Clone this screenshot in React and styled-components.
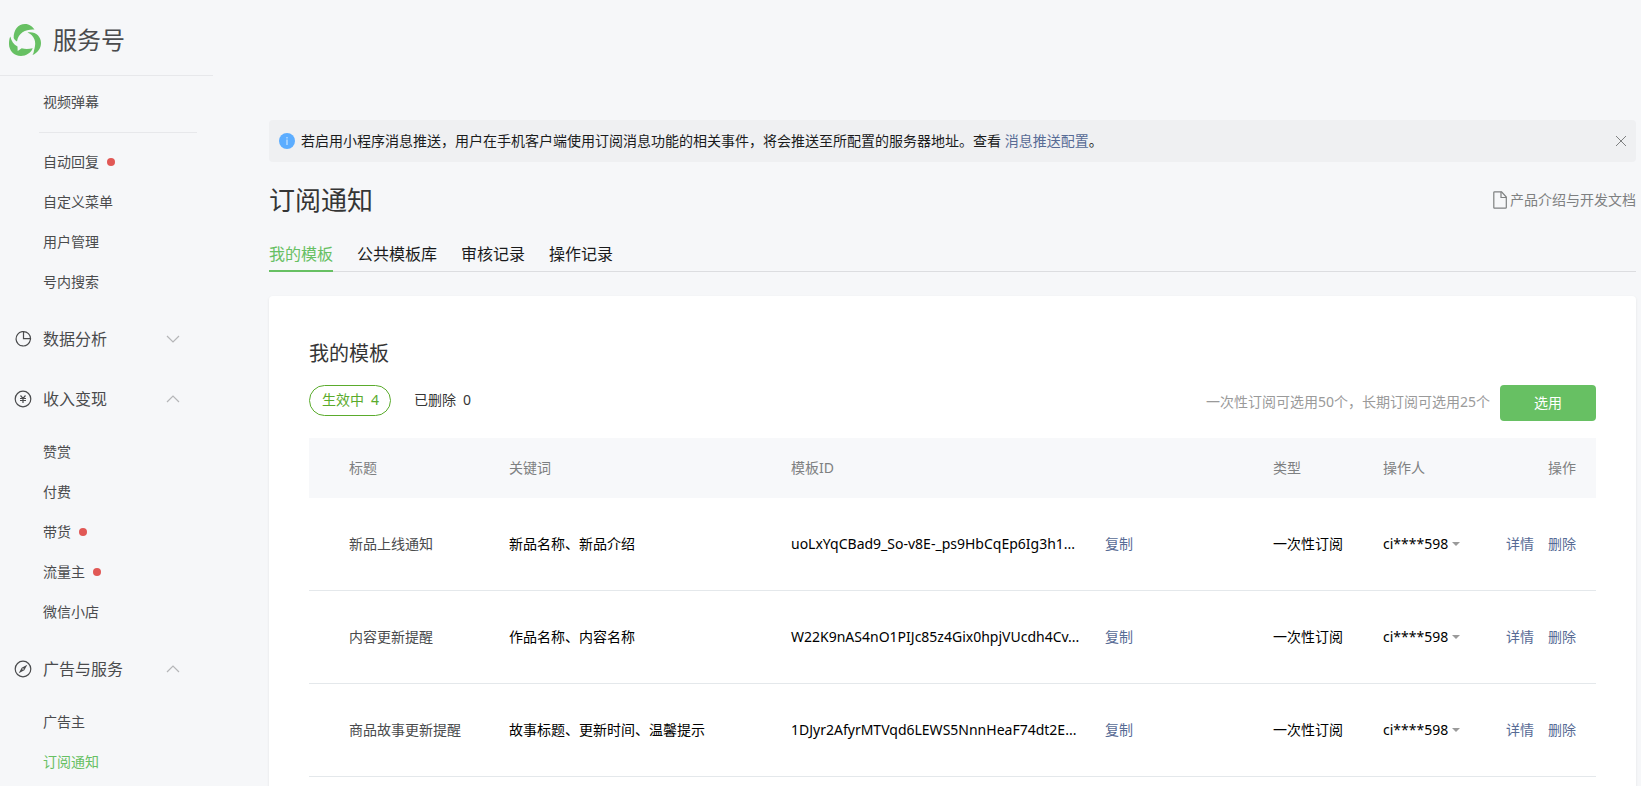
import React from "react";
import styled, { createGlobalStyle } from "styled-components";

const GlobalStyle = createGlobalStyle`
  * {
    box-sizing: border-box;
  }

  body {
    margin: 0;
    background-color: #f6f7f9;
    color: #1a1b1c;
    font-family: "Noto Sans", "Noto Sans CJK SC", sans-serif;
    font-size: 14px;
    line-height: 20px;
  }

  a {
    text-decoration: none;
  }

  button {
    border: none;
    padding: 0;
    background: none;
    font: inherit;
    color: inherit;
    cursor: pointer;
  }
`;

const Page = styled.div`
  display: flex;
  min-height: 100vh;
`;

const Sidebar = styled.aside`
  width: 213px;
  flex-shrink: 0;
`;

const Brand = styled.a`
  display: flex;
  align-items: center;
  gap: 12px;
  height: 76px;
  padding: 4px 0 0 9px;
  border-bottom: 1px solid #e7e8eb;
  color: #4a4b4d;
  font-size: 24px;
  line-height: 32px;
`;

const FirstGroup = styled.div`
  padding: 6px 0 8px;
`;

const MenuList = styled.ul`
  list-style: none;
  margin: 0;
  padding: ${(props) => (props.$sub ? "2px 0 8px" : "0")};
`;

const MenuLink = styled.a`
  display: flex;
  align-items: center;
  gap: 8px;
  height: 40px;
  padding-left: 43px;
  color: ${(props) => (props.$active ? "#67c063" : "#4a4b4d")};
`;

const Dot = styled.span`
  width: 8px;
  height: 8px;
  border-radius: 50%;
  background-color: #e15855;
`;

const Divider = styled.hr`
  height: 1px;
  margin: 10px 16px 9px 39px;
  border: none;
  background-color: #e7e8eb;
`;

const GroupButton = styled.button`
  display: flex;
  align-items: center;
  width: 100%;
  height: 60px;
  padding: 0 33px 2px 14px;
  color: #4a4b4d;
  font-size: 16px;
  line-height: 24px;
  text-align: left;
`;

const GroupName = styled.span`
  flex: 1;
  padding-left: 11px;
`;

const Main = styled.main`
  display: flex;
  flex: 1;
  flex-direction: column;
  min-width: 0;
  padding: 120px 5px 0 56px;
`;

const Notice = styled.div`
  display: flex;
  align-items: center;
  height: 42px;
  padding: 0 10px;
  border-radius: 4px;
  background-color: #eff0f2;
`;

const NoticeText = styled.p`
  flex: 1;
  margin: 0;
  padding-left: 6px;
`;

const TextLink = styled.a`
  color: #576b95;
`;

const CloseButton = styled.button`
  display: flex;
`;

const TitleBar = styled.div`
  display: flex;
  align-items: center;
  justify-content: space-between;
  height: 76px;
`;

const Title = styled.h1`
  margin: 0;
  color: #353535;
  font-size: 26px;
  font-weight: 400;
  line-height: 36px;
`;

const DocLink = styled.a`
  display: flex;
  align-items: center;
  gap: 3px;
  color: #7e8081;
`;

const Tabs = styled.nav`
  display: flex;
  gap: 24px;
  height: 34px;
  border-bottom: 1px solid #dcdde0;
`;

const Tab = styled.a`
  height: 34px;
  border-bottom: 2px solid ${(props) => (props.$active ? "#67c063" : "transparent")};
  color: ${(props) => (props.$active ? "#67c063" : "#1a1b1c")};
  font-size: 16px;
  line-height: 32px;
`;

const Card = styled.section`
  flex: 1;
  margin-top: 24px;
  padding: 40px 40px 0;
  border-radius: 4px 4px 0 0;
  background-color: #fff;
  box-shadow: 0 1px 3px rgba(0, 0, 0, 0.08);
`;

const CardTitle = styled.h2`
  margin: 0;
  color: #353535;
  font-size: 20px;
  font-weight: 400;
  line-height: 36px;
`;

const Toolbar = styled.div`
  display: flex;
  align-items: flex-start;
  justify-content: space-between;
  margin: 13px 0 17px;
`;

const Filters = styled.div`
  display: flex;
  gap: 10px;
`;

const Filter = styled.button`
  display: flex;
  align-items: center;
  gap: 7px;
  height: 31px;
  padding: 0 11px 1px 12px;
  border: 1px solid ${(props) => (props.$active ? "#5aab2c" : "transparent")};
  border-radius: 16px;
  color: ${(props) => (props.$active ? "#5aab2c" : "#353535")};
`;

const Picker = styled.div`
  display: flex;
  align-items: center;
  gap: 10px;
`;

const PickerHint = styled.span`
  padding-bottom: 2px;
  color: #9a9a9a;
`;

const PickButton = styled.button`
  width: 96px;
  height: 36px;
  border-radius: 4px;
  background-color: #67c063;
  color: #fff;
`;

const Table = styled.table`
  width: 100%;
  border-collapse: separate;
  border-spacing: 0;
  table-layout: fixed;
`;

const HeadCell = styled.th`
  width: ${(props) => props.$width || "auto"};
  height: 60px;
  padding: ${(props) => (props.$first ? "0 0 0 40px" : props.$last ? "0 20px 0 0" : "0")};
  background-color: #f7f8fa;
  color: #7e8081;
  font-weight: 400;
  text-align: ${(props) => (props.$last ? "right" : "left")};
`;

const Cell = styled.td`
  height: 93px;
  padding: ${(props) => (props.$first ? "0 0 0 40px" : props.$last ? "0 20px 0 0" : "0")};
  border-bottom: 1px solid #e4e8eb;
  color: ${(props) => (props.$first ? "#4a4b4d" : "#000")};
  text-align: ${(props) => (props.$last ? "right" : "left")};
  white-space: nowrap;
`;

const TemplateId = styled.div`
  display: flex;
  align-items: center;
`;

const IdText = styled.span`
  width: 314px;
`;

const Operator = styled.button`
  display: flex;
  align-items: center;
  gap: 4px;
`;

const Caret = styled.span`
  border: 4px solid transparent;
  border-top-color: #9a9a9a;
  border-bottom: none;
`;

const Actions = styled.div`
  display: flex;
  justify-content: flex-end;
  gap: 14px;
`;

const Logo = () => (
  <svg width="32" height="32" viewBox="0 0 32 32" fill="#67c063">
    <path d="M4.700 14C4.500 6 9 0 16 0c4.500 0 7.500 2.500 9.500 5.500C17 5 9.500 8.500 8 17.500 6.500 16.500 5.300 15.500 4.700 14Z" />
    <path d="M18.500 8.500C26 7 32 12 32 19c0 5.500-3.500 10-8.500 12C25 29 24.500 27.500 25.500 24.500 27.500 18 25.500 11.500 18.500 8.500Z" />
    <path d="M1.300 12.500C2.500 17 4.500 20.500 8.500 22.500L8.700 27l4-2.700c4 1.200 7.500.7 11 0C22 29 17 32 12 32 5 32 0 26.500 0 20c0-3 .3-5.500 1.300-7.500Z" />
  </svg>
);

const PieIcon = () => (
  <svg width="18" height="18" viewBox="0 0 18 18" fill="none" stroke="#4a4b4d" strokeWidth="1.200">
    <path d="M9.500 1.600v7h7a7 7 0 0 0-7-7Z" />
    <path d="M8 1.700a7.200 7.200 0 1 0 8.300 8.500" />
    <path d="M9.500 1.600Q8.700 1.500 8 1.700M16.500 8.600q0 .8-.2 1.600" />
  </svg>
);

const YenIcon = () => (
  <svg width="18" height="18" viewBox="0 0 18 18" fill="none" stroke="#4a4b4d" strokeWidth="1.200">
    <circle cx="9" cy="9" r="7.800" />
    <path d="M6.500 5.500 9 8.300l2.500-2.800M9 8.300v4.700M6 8.500h6M6 10.500h6" />
  </svg>
);

const CompassIcon = () => (
  <svg width="18" height="18" viewBox="0 0 18 18" fill="none" stroke="#4a4b4d" strokeWidth="1.200">
    <circle cx="9" cy="9" r="7.800" />
    <path
      d="M13.300 4.700 10.300 10.300 4.700 13.300 7.700 7.700ZM9 8.200a.8.8 0 1 0 0 1.600.8.8 0 0 0 0-1.600Z"
      fill="#4a4b4d"
      fillRule="evenodd"
      stroke="none"
    />
  </svg>
);

const Chevron = ({ up }) => (
  <svg width="14" height="8" viewBox="0 0 14 8" fill="none" stroke="#b5b6b8" strokeWidth="1.200">
    <path d={up ? "M1 7l6-6 6 6" : "M1 1l6 6 6-6"} />
  </svg>
);

const InfoIcon = () => (
  <svg width="16" height="16" viewBox="0 0 16 16">
    <circle cx="8" cy="8" r="8" fill="#5cadff" />
    <path d="M8 4v1.500M8 6.500V12" stroke="#b9dcff" strokeWidth="1.400" />
  </svg>
);

const CloseIcon = () => (
  <svg width="10" height="10" viewBox="0 0 10 10" stroke="#7e8081" strokeWidth="1">
    <path d="M0 0l10 10M10 0L0 10" />
  </svg>
);

const DocIcon = () => (
  <svg width="14" height="18" viewBox="0 0 14 18" fill="none" stroke="#7e8081" strokeWidth="1.200">
    <path d="M1.600.8h7L13.300 6v10.400q0 .8-.8.8H1.600q-.8 0-.8-.8V1.600q0-.8.8-.8Z" />
    <path d="M8 .8v5.700h5.300" />
  </svg>
);

const menuGroups = [
  { name: "数据分析", Icon: PieIcon, items: [] },
  {
    name: "收入变现",
    Icon: YenIcon,
    items: [
      { name: "赞赏" },
      { name: "付费" },
      { name: "带货", dot: true },
      { name: "流量主", dot: true },
      { name: "微信小店" },
    ],
  },
  {
    name: "广告与服务",
    Icon: CompassIcon,
    items: [{ name: "广告主" }, { name: "订阅通知", active: true }],
  },
];

const featureItems = [
  { name: "自动回复", dot: true },
  { name: "自定义菜单" },
  { name: "用户管理" },
  { name: "号内搜索" },
];

const templates = [
  {
    title: "新品上线通知",
    keywords: "新品名称、新品介绍",
    id: "uoLxYqCBad9_So-v8E-_ps9HbCqEp6Ig3h1...",
  },
  {
    title: "内容更新提醒",
    keywords: "作品名称、内容名称",
    id: "W22K9nAS4nO1PIJc85z4Gix0hpjVUcdh4Cv...",
  },
  {
    title: "商品故事更新提醒",
    keywords: "故事标题、更新时间、温馨提示",
    id: "1DJyr2AfyrMTVqd6LEWS5NnnHeaF74dt2E...",
  },
];

const Menu = ({ items, sub }) => (
  <MenuList $sub={sub}>
    {items.map((item) => (
      <li key={item.name}>
        <MenuLink href="#" $active={item.active}>
          {item.name}
          {item.dot && <Dot />}
        </MenuLink>
      </li>
    ))}
  </MenuList>
);

const App = () => {
  return (
    <Page>
      <GlobalStyle />
      <Sidebar>
        <Brand href="#">
          <Logo />
          服务号
        </Brand>
        <FirstGroup>
          <Menu items={[{ name: "视频弹幕" }]} />
          <Divider />
          <Menu items={featureItems} />
        </FirstGroup>
        {menuGroups.map(({ name, Icon, items }) => (
          <div key={name}>
            <GroupButton type="button" aria-expanded={items.length > 0}>
              <Icon />
              <GroupName>{name}</GroupName>
              <Chevron up={items.length > 0} />
            </GroupButton>
            {items.length > 0 && <Menu items={items} sub />}
          </div>
        ))}
      </Sidebar>
      <Main>
        <Notice>
          <InfoIcon />
          <NoticeText>
            若启用小程序消息推送，用户在手机客户端使用订阅消息功能的相关事件，将会推送至所配置的服务器地址。查看{" "}
            <TextLink href="#">消息推送配置</TextLink>。
          </NoticeText>
          <CloseButton type="button" aria-label="关闭">
            <CloseIcon />
          </CloseButton>
        </Notice>
        <TitleBar>
          <Title>订阅通知</Title>
          <DocLink href="#">
            <DocIcon />
            产品介绍与开发文档
          </DocLink>
        </TitleBar>
        <Tabs>
          <Tab href="#" $active>
            我的模板
          </Tab>
          <Tab href="#">公共模板库</Tab>
          <Tab href="#">审核记录</Tab>
          <Tab href="#">操作记录</Tab>
        </Tabs>
        <Card>
          <CardTitle>我的模板</CardTitle>
          <Toolbar>
            <Filters>
              <Filter type="button" $active>
                <span>生效中</span>
                <span>4</span>
              </Filter>
              <Filter type="button">
                <span>已删除</span>
                <span>0</span>
              </Filter>
            </Filters>
            <Picker>
              <PickerHint>一次性订阅可选用50个，长期订阅可选用25个</PickerHint>
              <PickButton type="button">选用</PickButton>
            </Picker>
          </Toolbar>
          <Table>
            <thead>
              <tr>
                <HeadCell $first $width="200px">
                  标题
                </HeadCell>
                <HeadCell $width="282px">关键词</HeadCell>
                <HeadCell>模板ID</HeadCell>
                <HeadCell $width="110px">类型</HeadCell>
                <HeadCell $width="100px">操作人</HeadCell>
                <HeadCell $last $width="113px">
                  操作
                </HeadCell>
              </tr>
            </thead>
            <tbody>
              {templates.map((item) => (
                <tr key={item.id}>
                  <Cell $first>{item.title}</Cell>
                  <Cell>{item.keywords}</Cell>
                  <Cell>
                    <TemplateId>
                      <IdText>{item.id}</IdText>
                      <TextLink href="#">复制</TextLink>
                    </TemplateId>
                  </Cell>
                  <Cell>一次性订阅</Cell>
                  <Cell>
                    <Operator type="button">
                      ci****598
                      <Caret />
                    </Operator>
                  </Cell>
                  <Cell $last>
                    <Actions>
                      <TextLink href="#">详情</TextLink>
                      <TextLink href="#">删除</TextLink>
                    </Actions>
                  </Cell>
                </tr>
              ))}
            </tbody>
          </Table>
        </Card>
      </Main>
    </Page>
  );
};

export default App;
